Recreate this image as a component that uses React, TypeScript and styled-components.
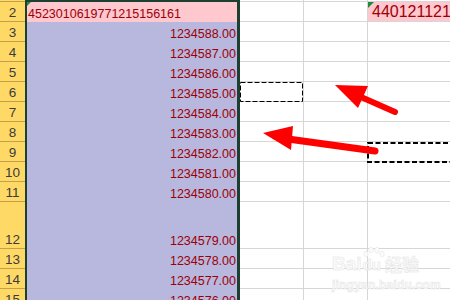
import React from "react";
import styled, { createGlobalStyle, css } from "styled-components";

const GlobalStyle = createGlobalStyle`
  html, body {
    margin: 0;
    padding: 0;
    background: #ffffff;
    overflow: hidden;
  }
  body {
    font-family: "Liberation Sans", Arial, sans-serif;
  }
`;

const COLS = "25px 215px 64px 64px 1fr";

const Sheet = styled.div`
  position: relative;
  width: 450px;
  height: 300px;
  overflow: hidden;
  background: #ffffff;
`;

const Row = styled.div<{ $h: number }>`
  display: grid;
  grid-template-columns: ${COLS};
  height: ${(p) => p.$h}px;
`;

const Header = styled.div`
  background: #ffd966;
  border-bottom: 1px solid #c6a048;
  box-sizing: border-box;
  display: flex;
  align-items: flex-end;
  justify-content: center;
  color: #3b3b3b;
  font-size: 13.5px;
  line-height: 16px;
`;

const SelCell = styled.div<{ $fill: string; $top?: boolean }>`
  position: relative;
  background: ${(p) => p.$fill};
  border-left: 2px solid #1c3f30;
  border-right: 3px solid #1c3f30;
  box-sizing: border-box;
  display: flex;
  align-items: flex-end;
  justify-content: flex-end;
  padding: 0 1px 0 1px;
  color: #9c0006;
  font-size: 12.5px;
  line-height: 16px;
  white-space: nowrap;
  ${(p) =>
    p.$top &&
    css`
      background: #1c3f30;
    `}
`;

const LeftText = styled.span`
  margin-right: auto;
`;

const GridCell = styled.div<{ $last?: boolean; $fill?: string }>`
  position: relative;
  background: ${(p) => p.$fill || "#ffffff"};
  border-bottom: 1px solid #d6d6d6;
  border-right: ${(p) => (p.$last ? "none" : "1px solid #d6d6d6")};
  box-sizing: border-box;
  display: flex;
  align-items: flex-end;
  padding-left: 4px;
  color: #9c0006;
  font-size: 16px;
  line-height: 18px;
  white-space: nowrap;
  overflow: visible;
`;

const Flag = styled.span<{ $size: number }>`
  position: absolute;
  left: 0;
  top: 0;
  width: 0;
  height: 0;
  border-top: ${(p) => p.$size}px solid #1e8a3a;
  border-right: ${(p) => p.$size}px solid transparent;
`;

const Overlay = styled.svg`
  position: absolute;
  left: 0;
  top: 0;
  pointer-events: none;
`;

const Watermark = styled.div`
  position: absolute;
  left: 332px;
  top: 246px;
  display: flex;
  flex-direction: column;
  align-items: flex-start;
  pointer-events: none;
  color: #fbfbfb;
  -webkit-text-stroke: 0.5px #e4e4e4;
`;

const MarkLine = styled.div`
  display: flex;
  align-items: flex-end;
  font-weight: bold;
  font-size: 19px;
  line-height: 20px;
  height: 28px;
`;

const Paw = styled.span`
  position: relative;
  display: inline-flex;
  align-items: flex-end;
  font-size: 15px;
  line-height: 16px;
  padding: 10px 1px 1px;
`;

const PawToes = styled.svg`
  position: absolute;
  left: 0;
  top: 0;
`;

const Cjk = styled.span`
  font-family: "Noto Sans CJK SC", sans-serif;
  font-size: 17px;
  margin-left: 3px;
`;

const Url = styled.div`
  font-size: 12px;
  font-weight: bold;
  line-height: 14px;
  margin-top: 4px;
  letter-spacing: 0.2px;
`;

type RowData = {
  n: number;
  h: number;
  b: string;
  pinkB?: boolean;
  e?: string;
};

const rows: RowData[] = [
  { n: 2, h: 20, b: "4523010619771215156161", pinkB: true, e: "440121121" },
  { n: 3, h: 20, b: "1234588.00" },
  { n: 4, h: 20, b: "1234587.00" },
  { n: 5, h: 20, b: "1234586.00" },
  { n: 6, h: 20, b: "1234585.00" },
  { n: 7, h: 20, b: "1234584.00" },
  { n: 8, h: 20, b: "1234583.00" },
  { n: 9, h: 20, b: "1234582.00" },
  { n: 10, h: 20, b: "1234581.00" },
  { n: 11, h: 20, b: "1234580.00" },
  { n: 12, h: 47, b: "1234579.00" },
  { n: 13, h: 20, b: "1234578.00" },
  { n: 14, h: 20, b: "1234577.00" },
  { n: 15, h: 20, b: "1234576.00" },
];

const toe = { fill: "#fbfbfb", stroke: "#e4e4e4", strokeWidth: 0.6 };

const App = () => {
  return (
    <>
      <GlobalStyle />
      <Sheet>
        <Row $h={2}>
          <Header />
          <SelCell $fill="#1c3f30" $top />
          <GridCell />
          <GridCell />
          <GridCell $last />
        </Row>
        {rows.map((r) => (
          <Row key={r.n} $h={r.h}>
            <Header>{r.n}</Header>
            <SelCell $fill={r.pinkB ? "#ffc7ce" : "#b8b7de"}>
              {r.pinkB ? (
                <>
                  <Flag $size={4} />
                  <LeftText>{r.b}</LeftText>
                </>
              ) : (
                r.b
              )}
            </SelCell>
            <GridCell />
            <GridCell />
            <GridCell $last $fill={r.e ? "#ffc7ce" : undefined}>
              {r.e && (
                <>
                  <Flag $size={6} />
                  {r.e}
                </>
              )}
            </GridCell>
          </Row>
        ))}

        <Overlay width={450} height={300} viewBox="0 0 450 300">
          {/* copy marquees */}
          <rect x={240.5} y={82.5} width={62} height={19} fill="none" stroke="#000" strokeWidth={1} strokeDasharray="5 2" />
          <rect x={368} y={143} width={90} height={19} fill="none" stroke="#000" strokeWidth={2} strokeDasharray="5 2.5" />
          {/* red arrows */}
          <line x1={361} y1={97} x2={395} y2={112} stroke="#ff0000" strokeWidth={6} strokeLinecap="round" />
          <polygon points="335,85 368,86 358,108" fill="#ff0000" />
          <line x1={288} y1={139} x2={375} y2={151} stroke="#ff0000" strokeWidth={7} strokeLinecap="round" />
          <polygon points="263,133 293,126 291,150" fill="#ff0000" />
        </Overlay>

        <Watermark>
          <MarkLine>
            Bai
            <Paw>
              <PawToes width={24} height={12} viewBox="0 0 24 12">
                <ellipse cx={4} cy={7} rx={2.2} ry={2.8} {...toe} />
                <ellipse cx={9} cy={3} rx={2.2} ry={2.8} {...toe} />
                <ellipse cx={15} cy={3} rx={2.2} ry={2.8} {...toe} />
                <ellipse cx={20} cy={7} rx={2.2} ry={2.8} {...toe} />
              </PawToes>
              du
            </Paw>
            <Cjk>经验</Cjk>
          </MarkLine>
          <Url>jingyan.baidu.com</Url>
        </Watermark>
      </Sheet>
    </>
  );
};

export default App;
